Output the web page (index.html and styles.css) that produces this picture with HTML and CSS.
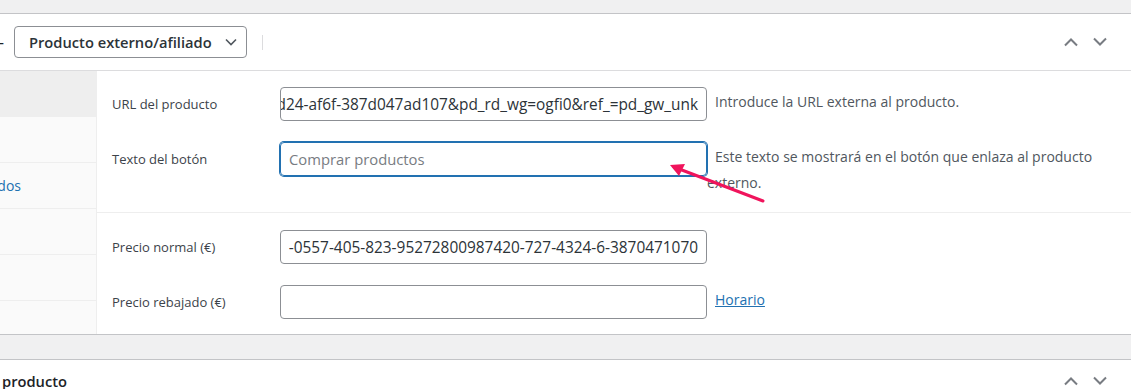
FILE: index.html
```html
<!DOCTYPE html>
<html lang="es">
<head>
    <meta charset="UTF-8">
    <meta name="viewport" content="width=device-width, initial-scale=1.0">
    <title>Datos del producto</title>
    <link rel="stylesheet" href="styles.css">
</head>
<body>
    <div class="postbox">
        <div class="postbox-header">
            <h2 class="hndle">
                <span class="cut">Datos del producto —</span>
                <span class="select-box">Producto externo/afiliado
                    <svg class="caret" width="12" height="8" viewBox="0 0 12 8"><path d="M1 1.5l5 5 5-5" fill="none" stroke="#50575e" stroke-width="1.6"/></svg>
                </span>
                <span class="sep"></span>
            </h2>
            <div class="handle-actions">
                <svg width="16" height="10" viewBox="0 0 16 10"><path d="M2 8.5l6-6 6 6" fill="none" stroke="#787c82" stroke-width="2"/></svg>
                <svg width="16" height="10" viewBox="0 0 16 10"><path d="M2 1.5l6 6 6-6" fill="none" stroke="#787c82" stroke-width="2"/></svg>
            </div>
        </div>

        <div class="panel-wrap">
            <ul class="product-tabs">
                <li class="active"></li>
                <li></li>
                <li><span class="tab-link">Productos enlazados</span></li>
                <li></li>
                <li></li>
                <li class="last"></li>
            </ul>

            <div class="options-panel">
                <div class="options-group">
                    <p class="form-field">
                        <label>URL del producto</label>
                        <span class="input scrolled"><span>https://www.amazon.es/dp/B08N5WRWNW?pd_rd_r=8c1b2e3a-5f2d-4d24-af6f-387d047ad107&amp;pd_rd_wg=ogfi0&amp;ref_=pd_gw_unk</span></span>
                        <span class="description">Introduce la URL externa al producto.</span>
                    </p>
                    <p class="form-field">
                        <label>Texto del botón</label>
                        <span class="input focused placeholder">Comprar productos</span>
                        <span class="description">Este texto se mostrará en el botón que enlaza al producto externo.</span>
                    </p>
                </div>
                <div class="options-group">
                    <p class="form-field">
                        <label>Precio normal (€)</label>
                        <span class="input scrolled"><span>-0557-405-823-95272800987420-727-4324-6-3870471070</span></span>
                        <span class="description"></span>
                    </p>
                    <p class="form-field">
                        <label>Precio rebajado (€)</label>
                        <span class="input"></span>
                        <span class="description"><a href="#" class="link">Horario</a></span>
                    </p>
                </div>
            </div>
        </div>

        <svg class="pointer" width="110" height="50" viewBox="0 0 110 50">
            <path d="M103 47L14 13" fill="none" stroke="#f0145c" stroke-width="3" stroke-linecap="round"/>
            <path d="M10 11L25 10L19 22Z" fill="#f0145c"/>
        </svg>
    </div>

    <div class="postbox next">
        <div class="postbox-header">
            <h2 class="hndle"><span class="cut short">Descripción corta del producto</span></h2>
            <div class="handle-actions">
                <svg width="16" height="10" viewBox="0 0 16 10"><path d="M2 8.5l6-6 6 6" fill="none" stroke="#787c82" stroke-width="2"/></svg>
                <svg width="16" height="10" viewBox="0 0 16 10"><path d="M2 1.5l6 6 6-6" fill="none" stroke="#787c82" stroke-width="2"/></svg>
            </div>
        </div>
    </div>
</body>
</html>
```

FILE: styles.css
```css
body {
    margin: 0;
    background: #f0f0f1;
    font-family: 'Open Sans', sans-serif;
    color: #3c434a;
    font-size: 13px;
    overflow: hidden;
}
.postbox {
    margin-top: 13px;
    background: #fff;
    border-top: 1px solid #c3c4c7;
    border-bottom: 1px solid #c3c4c7;
    position: relative;
}
.postbox.next {
    margin-top: 24px;
    border-bottom: none;
}
.postbox-header {
    height: 56px;
    display: flex;
    align-items: center;
    justify-content: space-between;
    border-bottom: 1px solid #dcdcde;
}
.next .postbox-header {
    height: 42px;
    border-bottom: none;
}
.hndle {
    margin: 0;
    display: flex;
    align-items: center;
    font-size: 14.7px;
    font-weight: 600;
    color: #1d2327;
}
.cut {
    display: flex;
    justify-content: flex-end;
    overflow: hidden;
    white-space: nowrap;
    width: 4px;
}
.cut.short {
    width: 67px;
}
.select-box {
    margin-left: 10px;
    width: 233px;
    height: 32px;
    box-sizing: border-box;
    border: 1px solid #8c8f94;
    border-radius: 4px;
    display: flex;
    align-items: center;
    justify-content: space-between;
    padding: 0 9px 0 14px;
    font-size: 14.7px;
    font-weight: 600;
    color: #2c3338;
}
.sep {
    width: 1px;
    height: 15px;
    background: #dcdcde;
    margin-left: 15px;
}
.handle-actions {
    display: flex;
    gap: 13px;
    padding-right: 23px;
}
.panel-wrap {
    display: flex;
}
.product-tabs {
    list-style: none;
    margin: 0;
    padding: 0;
    width: 96px;
    background: #fafafa;
    border-right: 1px solid #eee;
}
.product-tabs li {
    height: 45px;
    border-bottom: 1px solid #eee;
    display: flex;
    align-items: center;
    justify-content: flex-end;
    overflow: hidden;
    padding-right: 75px;
}
.product-tabs li.active {
    background: #eee;
}
.product-tabs li.last {
    height: 33px;
    border-bottom: none;
}
.tab-link {
    white-space: nowrap;
    color: #2271b1;
    font-size: 14px;
}
.options-panel {
    flex: 1;
}
.options-group {
    border-bottom: 1px solid #eee;
    padding: 11px 0 11px;
}
.options-group:last-child {
    border-bottom: none;
    padding: 12px 0 10px;
}
.form-field {
    display: flex;
    align-items: flex-start;
    margin: 5px 0 21px;
}
.options-group .form-field:last-child {
    margin-bottom: 5px;
}
.form-field label {
    width: 183px;
    padding-left: 15px;
    box-sizing: border-box;
    line-height: 34px;
    flex-shrink: 0;
    font-size: 13px;
}
.input {
    width: 427px;
    height: 34px;
    box-sizing: border-box;
    border: 1px solid #8c8f94;
    border-radius: 4px;
    padding: 0 8px;
    display: flex;
    align-items: center;
    flex-shrink: 0;
    overflow: hidden;
    white-space: nowrap;
    font-size: 15.4px;
    color: #2c3338;
}
.input.scrolled {
    justify-content: flex-end;
}
.input.focused {
    border-color: #2271b1;
    box-shadow: 0 0 0 1px #2271b1;
}
.input.placeholder {
    color: #787c82;
    font-size: 14.8px;
}
.description {
    flex: 1;
    padding-right: 20px;
    text-indent: 8px;
    line-height: 26px;
    margin-top: 2px;
    font-size: 14px;
    color: #50575e;
}
.link {
    color: #2271b1;
}
.pointer {
    position: absolute;
    left: 660px;
    top: 140px;
}
```
